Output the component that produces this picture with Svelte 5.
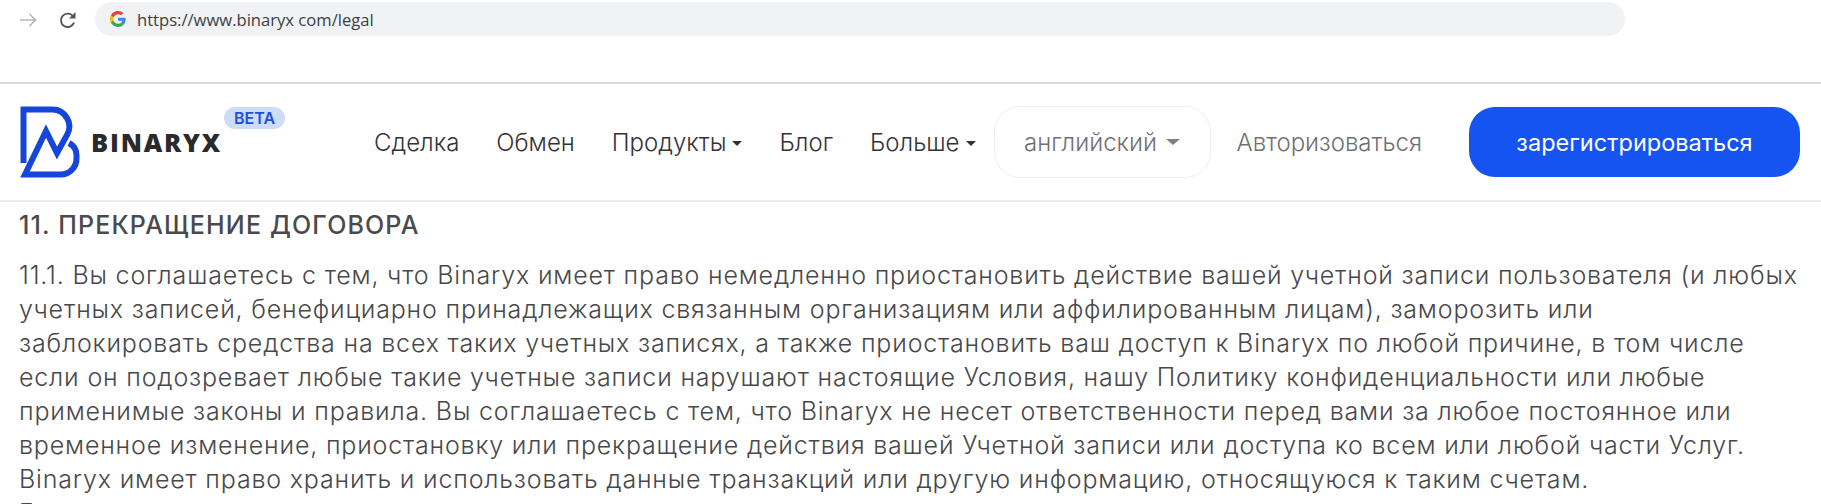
<script>
  const nav = [
    { label: 'Сделка' },
    { label: 'Обмен' },
    { label: 'Продукты', caret: true },
    { label: 'Блог' },
    { label: 'Больше', caret: true }
  ];

  const lines = [
    '11.1. Вы соглашаетесь с тем, что Binaryx имеет право немедленно приостановить действие вашей учетной записи пользователя (и любых',
    'учетных записей, бенефициарно принадлежащих связанным организациям или аффилированным лицам), заморозить или',
    'заблокировать средства на всех таких учетных записях, а также приостановить ваш доступ к Binaryx по любой причине, в том числе',
    'если он подозревает любые такие учетные записи нарушают настоящие Условия, нашу Политику конфиденциальности или любые',
    'применимые законы и правила. Вы соглашаетесь с тем, что Binaryx не несет ответственности перед вами за любое постоянное или',
    'временное изменение, приостановку или прекращение действия вашей Учетной записи или доступа ко всем или любой части Услуг.',
    'Binaryx имеет право хранить и использовать данные транзакций или другую информацию, относящуюся к таким счетам.',
    'Б'
  ];
</script>

<div class="page">
  <div class="browser">
    <svg class="back" width="17" height="14" viewBox="0 0 17 14">
      <path d="M0 7h15.500M9.500 1l6 6-6 6" fill="none" stroke="#b4b6b8" stroke-width="1.6" />
    </svg>
    <svg class="reload" width="18" height="18" viewBox="0 0 18 18">
      <path d="M15 11.500a6.700 6.700 0 1 1-1-6.200" fill="none" stroke="#54575a" stroke-width="1.9" />
      <path d="M16.500 1v6.500H10z" fill="#54575a" />
    </svg>
    <div class="address">
      <svg width="16" height="16" viewBox="0 0 48 48">
        <path fill="#ea4335" d="M24 9.500c3.500 0 6.700 1.200 9.200 3.600l6.900-6.900C35.900 2.400 30.500 0 24 0 14.600 0 6.500 5.400 2.600 13.200l8 6.200C12.500 13.700 17.800 9.500 24 9.500z" />
        <path fill="#4285f4" d="M47 24.500c0-1.600-.2-3.100-.4-4.500H24v9h13c-.6 3-2.300 5.500-4.800 7.200l7.700 6C44.400 37.900 47 31.800 47 24.500z" />
        <path fill="#fbbc05" d="M10.500 28.600a14.500 14.500 0 0 1 0-9.200l-8-6.200a24 24 0 0 0 0 21.600z" />
        <path fill="#34a853" d="M24 48c6.500 0 11.900-2.100 15.900-5.800l-7.700-6c-2.200 1.400-4.900 2.300-8.200 2.300-6.200 0-11.500-4.200-13.400-9.900l-8 6.200C6.500 42.600 14.600 48 24 48z" />
      </svg>
      <span class="url">https://www.binaryx com/legal</span>
    </div>
  </div>

  <header class="site-header">
    <div class="brand">
      <svg class="mark" width="60" height="74" viewBox="20 105 60 74">
        <path d="M23.500 163V109.500H52A17 17 0 0 1 67 135L57 153 46 131 25 174.500H60A16 16 0 0 0 76.500 158V155A14 14 0 0 0 69 143" fill="none" stroke="#1546d8" stroke-width="6" />
      </svg>
      <span class="wordmark">BINARYX</span>
      <span class="beta">BETA</span>
    </div>

    <nav class="nav">
      {#each nav as item (item.label)}
        <span class="nav-item">
          {item.label}{#if item.caret}<i class="caret"></i>{/if}
        </span>
      {/each}
    </nav>

    <div class="lang">английский <i class="caret grey"></i></div>
    <span class="login">Авторизоваться</span>
    <button class="signup">зарегистрироваться</button>
  </header>

  <main class="legal">
    <h2>11. ПРЕКРАЩЕНИЕ ДОГОВОРА</h2>
    <p>
      {#each lines as line (line)}
        <span class="line">{line}</span>
      {/each}
    </p>
  </main>
</div>

<style>
  :global(body) {
    margin: 0;
    background: #fff;
  }

  .page {
    height: 504px;
    overflow: hidden;
    font-family: Inter, "Open Sans", sans-serif;
  }

  .browser {
    box-sizing: border-box;
    height: 84px;
    display: flex;
    align-items: flex-start;
    padding: 2px 0 0 20px;
    border-bottom: 2px solid #dcdcdc;
  }

  .back {
    margin: 11px 22px 0 0;
  }

  .reload {
    margin: 9px 0 0 0;
  }

  .address {
    width: 1530px;
    height: 34px;
    margin-left: 18px;
    padding-left: 15px;
    box-sizing: border-box;
    display: flex;
    align-items: center;
    gap: 11px;
    border-radius: 17px;
    background: #f0f2f4;
  }

  .url {
    font-family: "Open Sans", sans-serif;
    font-size: 16.600px;
    color: #3c3f43;
  }

  .site-header {
    box-sizing: border-box;
    height: 118px;
    display: flex;
    align-items: center;
    padding: 0 21px 0 20px;
    border-bottom: 2px solid #eceef0;
  }

  .brand {
    position: relative;
    width: 354px;
    flex: none;
    display: flex;
    align-items: center;
    gap: 11px;
  }

  .wordmark {
    font-family: "Open Sans", sans-serif;
    font-size: 25.500px;
    font-weight: 800;
    letter-spacing: 1.800px;
    color: #2a2a2c;
  }

  .beta {
    position: absolute;
    left: 204px;
    top: 2px;
    padding: 1px 10px;
    border-radius: 11px;
    background: #cfdcf8;
    color: #1e50d8;
    font-size: 16px;
    font-weight: 600;
  }

  .nav {
    display: flex;
    gap: 37px;
    font-size: 24px;
    font-weight: 300;
    color: #333336;
  }

  .nav-item {
    white-space: nowrap;
  }

  .caret {
    display: inline-block;
    margin-left: 6px;
    vertical-align: middle;
    border: 5px solid transparent;
    border-top-color: #333;
    border-bottom-width: 0;
  }

  .caret.grey {
    border-top-color: #808084;
    border-width: 6px 7px 0;
  }

  .lang {
    box-sizing: border-box;
    width: 217px;
    height: 72px;
    flex: none;
    margin-left: 18px;
    display: flex;
    align-items: center;
    justify-content: center;
    gap: 3px;
    border: 1px solid #eceef0;
    border-radius: 26px;
    font-size: 24px;
    font-weight: 300;
    color: #707074;
  }

  .login {
    margin-left: 26px;
    font-size: 24px;
    font-weight: 300;
    color: #707074;
  }

  .signup {
    width: 331px;
    height: 70px;
    margin-left: auto;
    border: 0;
    border-radius: 26px;
    background: #1554f0;
    color: #fff;
    font-family: inherit;
    font-size: 23.500px;
    font-weight: 400;
  }

  .legal {
    padding: 6px 0 0 19px;
  }

  h2 {
    margin: 0 0 16px;
    font-size: 25px;
    line-height: 34px;
    letter-spacing: 1.150px;
    font-weight: 500;
    color: #4a4a4c;
  }

  p {
    margin: 0;
    font-size: 25px;
    letter-spacing: 0.820px;
    font-weight: 300;
    line-height: 34px;
    color: #48484a;
  }

  .line {
    display: block;
    white-space: nowrap;
  }
</style>
